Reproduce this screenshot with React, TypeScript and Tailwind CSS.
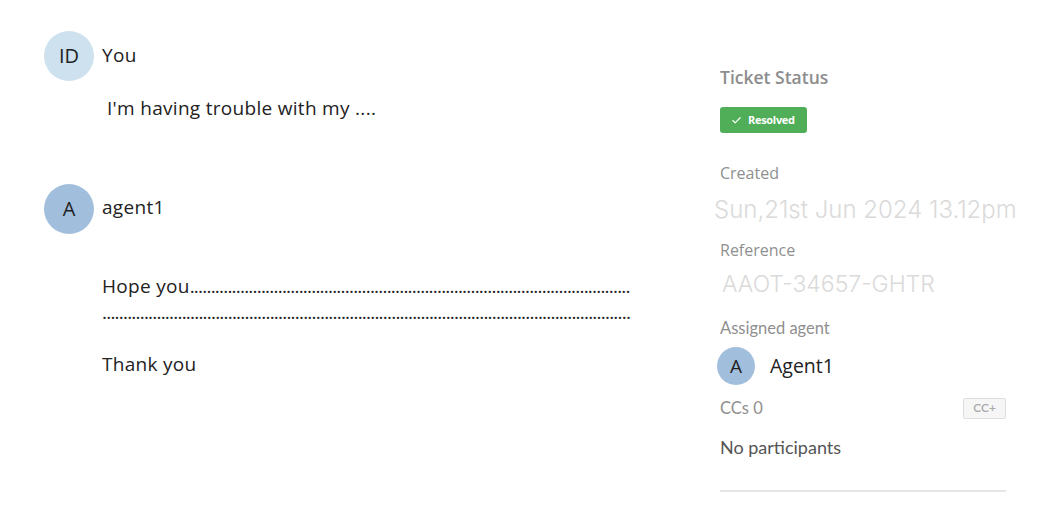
import { Check } from "lucide-react";

const lineOne = ".".repeat(105);
const lineTwo = ".".repeat(126);

const Avatar = ({ label, className }: { label: string; className: string }) => {
  return (
    <div
      className={`flex items-center justify-center rounded-full text-[#222] ${className}`}
    >
      {label}
    </div>
  );
};

const Conversation = () => {
  return (
    <div className="w-[720px] shrink-0 pl-[44px] pt-[31px] font-['Open_Sans',sans-serif] text-[19px] tracking-[0.3px] text-[#222]">
      <div className="flex items-center gap-[8px]">
        <Avatar label="ID" className="w-[50px] h-[50px] bg-[#cde1ef] text-[20px] tracking-normal" />
        <span className="-mt-[2px]">You</span>
      </div>
      <p className="mt-[14px] ml-[63px] leading-[26px]">I'm having trouble with my ....</p>

      <div className="mt-[63px] flex items-center gap-[8px]">
        <Avatar label="A" className="w-[50px] h-[50px] bg-[#a1bfdc] text-[20px] tracking-normal" />
        <span className="-mt-[4px]">agent1</span>
      </div>
      <div className="ml-[58px] mt-[39px] text-[#222]">
        <div className="whitespace-nowrap leading-[26px]">
          Hope you<span className="tracking-[-0.8px]">{lineOne}</span>
        </div>
        <div className="whitespace-nowrap leading-[26px] tracking-[-0.8px]">{lineTwo}</div>
        <p className="mt-[26px] leading-[26px]">Thank you</p>
      </div>
    </div>
  );
};

const TicketPanel = () => {
  return (
    <div className="w-[286px] shrink-0 pt-[65px] font-['Lato',sans-serif]">
      <div className="font-['Open_Sans',sans-serif] text-[17.5px] font-semibold leading-[24px] text-[#8d8d8d]">
        Ticket Status
      </div>
      <div className="mt-[18px] flex h-[26px] w-[87px] items-center gap-[6px] rounded-[3px] bg-[#4fae57] pl-[11px] text-[11px] font-bold tracking-[-0.3px] text-white font-['Open_Sans',sans-serif]">
        <Check size={11} strokeWidth={2.5} />
        Resolved
      </div>
      <div className="mt-[28px] font-['Open_Sans',sans-serif] text-[16px] leading-[24px] text-[#8f8f8f]">
        Created
      </div>
      <div className="-ml-[6px] mt-[10px] whitespace-nowrap font-['Inter',sans-serif] text-[24px] font-light leading-[30px] text-[#dadada]">
        Sun,21st Jun 2024 13.12pm
      </div>
      <div className="mt-[13px] font-['Open_Sans',sans-serif] text-[16px] leading-[24px] text-[#8f8f8f]">
        Reference
      </div>
      <div className="ml-[2px] mt-[7px] font-['Inter',sans-serif] text-[23px] font-light leading-[30px] text-[#dadada]">
        AAOT-34657-GHTR
      </div>
      <div className="mt-[17px] text-[16.5px] leading-[24px] text-[#8f8f8f]">Assigned agent</div>
      <div className="-ml-[3px] mt-[7px] flex items-center gap-[15px]">
        <Avatar label="A" className="w-[38px] h-[38px] bg-[#a1bfdc] text-[19px] font-['Open_Sans',sans-serif]" />
        <span className="font-['Open_Sans',sans-serif] text-[19.5px] text-[#222]">Agent1</span>
      </div>
      <div className="mt-[11px] flex items-center justify-between">
        <span className="text-[16.5px] leading-[24px] text-[#8f8f8f]">CCs 0</span>
        <button className="flex h-[21px] w-[43px] items-center justify-center rounded-[2px] border border-[#dedede] bg-[#f6f6f6] text-[12px] font-semibold text-[#aaaaaa]">
          CC+
        </button>
      </div>
      <div className="mt-[15px] text-[18px] leading-[24px] text-[#555]">No participants</div>
      <div className="mt-[31px] h-[2px] bg-[#e6e6e6]" />
    </div>
  );
};

export default function App() {
  return (
    <div className="flex h-[516px] w-[1062px] bg-white">
      <Conversation />
      <TicketPanel />
    </div>
  );
}
